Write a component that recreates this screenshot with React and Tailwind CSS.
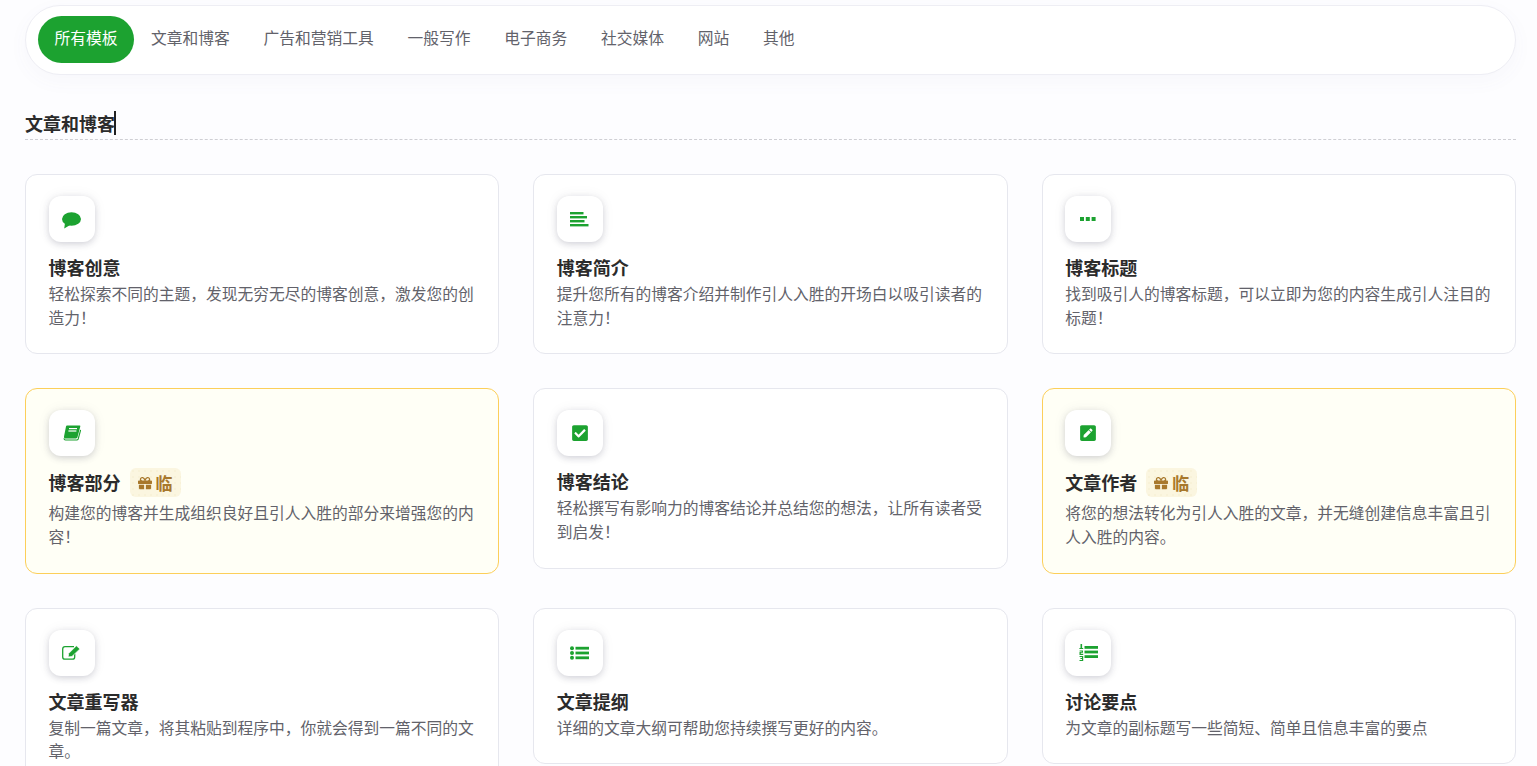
import { FaPenSquare, FaCheckSquare, FaGift } from 'react-icons/fa';

const tabs = ['文章和博客', '广告和营销工具', '一般写作', '电子商务', '社交媒体', '网站', '其他'];

function CommentIcon() {
  return (
    <svg width="19" height="17" viewBox="0 0 19 17" className="mt-[3px] fill-[#1ca230]">
      <ellipse cx="9.5" cy="7" rx="9.5" ry="6.8" />
      <path d="M3 11 L2.2 16.4 L9 12.5 Z" />
    </svg>
  );
}

function AlignIcon() {
  return (
    <svg width="19" height="15" viewBox="0 0 19 15" className="fill-[#1ca230]">
      <rect x="0" y="0" width="13.5" height="2.4" />
      <rect x="0" y="4" width="17" height="2.4" />
      <rect x="0" y="8" width="14.5" height="2.4" />
      <rect x="0" y="12" width="18.5" height="2.4" />
    </svg>
  );
}

function DotsIcon() {
  return (
    <svg width="16" height="4" viewBox="0 0 16 4" className="fill-[#1ca230]">
      <rect x="0" y="0" width="4" height="4" />
      <rect x="5.8" y="0" width="4" height="4" />
      <rect x="11.6" y="0" width="4" height="4" />
    </svg>
  );
}

function BookIcon() {
  return (
    <svg width="18" height="16" viewBox="0 0 18 16">
      <path d="M4 .5 H16.6 Q17.6 .5 17.3 1.6 L14.4 12.6 Q14.1 13.4 13 13.4 H2 Q.6 13.4 1 11.6 L3 1.6 Q3.2 .5 4 .5 Z" className="fill-[#1ca230]" />
      <path d="M1 13.2 Q1 15 2.6 15 H13.8 Q14.8 15 15.2 14 L17.6 5" className="fill-none stroke-[#1ca230]" strokeWidth="1.1" />
      <rect x="6" y="3" width="8" height="1.2" className="fill-white" />
      <rect x="5.4" y="5.4" width="8" height="1.2" className="fill-white" />
    </svg>
  );
}

function EditIcon() {
  return (
    <svg width="19" height="15" viewBox="0 0 19 15">
      <path d="M12 1.6 H3 Q.7 1.6 .7 3.9 V11.9 Q.7 14.2 3 14.2 H10.4 Q12.7 14.2 12.7 11.9 V8.5" className="fill-none stroke-[#1ca230]" strokeWidth="1.3" />
      <path d="M6.6 8.6 L14.4 .8 L17.9 3.9 L10 11.4 L6.2 12 Z" className="fill-[#1ca230] stroke-white" strokeWidth=".7" />
    </svg>
  );
}

function ListIcon() {
  return (
    <svg width="19" height="14" viewBox="0 0 19 14" className="fill-[#1ca230]">
      <circle cx="2" cy="2.2" r="2" />
      <circle cx="2" cy="7" r="2" />
      <circle cx="2" cy="11.8" r="2" />
      <rect x="5.5" y=".8" width="13.5" height="2.8" />
      <rect x="5.5" y="5.6" width="13.5" height="2.8" />
      <rect x="5.5" y="10.4" width="13.5" height="2.8" />
    </svg>
  );
}

function NumberedListIcon() {
  return (
    <svg width="19" height="17" viewBox="0 0 19 17" className="fill-[#1ca230]">
      <rect x="1.5" y="0" width="1.6" height="4.6" />
      <rect x=".4" y="4" width="3.8" height="1" />
      <path d="M.6 6.4 H4 V8.8 H1.8 V9.8 H4.2 V11 H.5 V8 H2.8 V7.5 H.6 Z" />
      <path d="M.6 12 H4.2 V17 H.5 V16 H3 V15 H1.4 V14 H3 V13 H.6 Z" />
      <rect x="5.5" y="2" width="13.5" height="2.8" />
      <rect x="5.5" y="6.6" width="13.5" height="2.8" />
      <rect x="5.5" y="11.2" width="13.5" height="2.8" />
    </svg>
  );
}

const cards = [
  { icon: <CommentIcon />, title: '博客创意', text: '轻松探索不同的主题\uFF0C发现无穷无尽的博客创意\uFF0C激发您的创造力\uFF01' },
  { icon: <AlignIcon />, title: '博客简介', text: '提升您所有的博客介绍并制作引人入胜的开场白以吸引读者的注意力\uFF01' },
  { icon: <DotsIcon />, title: '博客标题', text: '找到吸引人的博客标题\uFF0C可以立即为您的内容生成引人注目的标题\uFF01' },
  { icon: <BookIcon />, title: '博客部分', text: '构建您的博客并生成组织良好且引人入胜的部分来增强您的内容\uFF01', premium: true },
  { icon: <FaCheckSquare size={18} className="text-[#1ca230]" />, title: '博客结论', text: '轻松撰写有影响力的博客结论并总结您的想法\uFF0C让所有读者受到启发\uFF01' },
  { icon: <FaPenSquare size={18} className="text-[#1ca230]" />, title: '文章作者', text: '将您的想法转化为引人入胜的文章\uFF0C并无缝创建信息丰富且引人入胜的内容。', premium: true },
  { icon: <EditIcon />, title: '文章重写器', text: '复制一篇文章\uFF0C将其粘贴到程序中\uFF0C你就会得到一篇不同的文章。' },
  { icon: <ListIcon />, title: '文章提纲', text: '详细的文章大纲可帮助您持续撰写更好的内容。' },
  { icon: <NumberedListIcon />, title: '讨论要点', text: '为文章的副标题写一些简短、简单且信息丰富的要点' },
];

function TemplateCard({ icon, title, text, premium }) {
  return (
    <div className={`rounded-xl border px-[22.5px] pt-[21px] pb-[24px] ${premium ? 'border-[#fccf5a] bg-[#fffff6]' : 'border-[#e6e7ee] bg-white'}`}>
      <div className="flex h-[46px] w-[46px] items-center justify-center rounded-xl bg-white shadow-[0_2px_6px_rgba(60,60,90,0.2),0_0_14px_rgba(60,60,90,0.06)]">
        {icon}
      </div>
      <div className="mt-[12px] flex items-center gap-[9px]">
        <h3 className="text-lg leading-[27px] font-bold text-[#2b2b2b]">{title}</h3>
        {premium && (
          <span className="flex h-[29px] items-center gap-[4px] rounded-md bg-[#fbf6e0] bg-[radial-gradient(#f8f2d8_1px,transparent_1px)] bg-[length:6px_6px] px-[8px] text-[17px] font-semibold text-[#a8782c]">
            <FaGift size={14} />
            临
          </span>
        )}
      </div>
      <p className={`text-[15.75px] leading-[23.625px] text-[#62626a] ${premium ? 'mt-[4px]' : 'mt-[1px]'}`}>{text}</p>
    </div>
  );
}

export default function App() {
  return (
    <div className="h-screen overflow-hidden bg-[#fdfdff] pt-[5px] pr-[21px] pl-[25px] font-['Noto_Sans_CJK_SC',sans-serif]">
      <div className="flex h-[70px] items-center rounded-[35px] border border-[#eeeef4] bg-white pb-[2px] pl-3 shadow-[0_6px_20px_rgba(90,90,160,0.04)]">
        <div className="mr-[17px] flex h-[47px] w-[96px] items-center justify-center rounded-[24px] bg-[#1ca230] pb-[3px] text-[15.75px] text-white">所有模板</div>
        <div className="flex items-center gap-[33.75px] pb-[3px]">
          {tabs.map((t) => (
            <span key={t} className="text-[15.75px] text-[#62626a]">{t}</span>
          ))}
        </div>
      </div>

      <div className="mt-[32px] flex h-[33px] items-center border-b border-dashed border-[#cfcfd4]">
        <h2 className="w-[91px] border-r-2 border-[#222] text-lg leading-[24px] font-bold whitespace-nowrap text-[#2b2b2b]">文章和博客</h2>
      </div>

      <div className="mt-[34px] grid grid-cols-3 items-start gap-[34px]">
        {cards.map((c) => (
          <TemplateCard key={c.title} {...c} />
        ))}
      </div>
    </div>
  );
}
